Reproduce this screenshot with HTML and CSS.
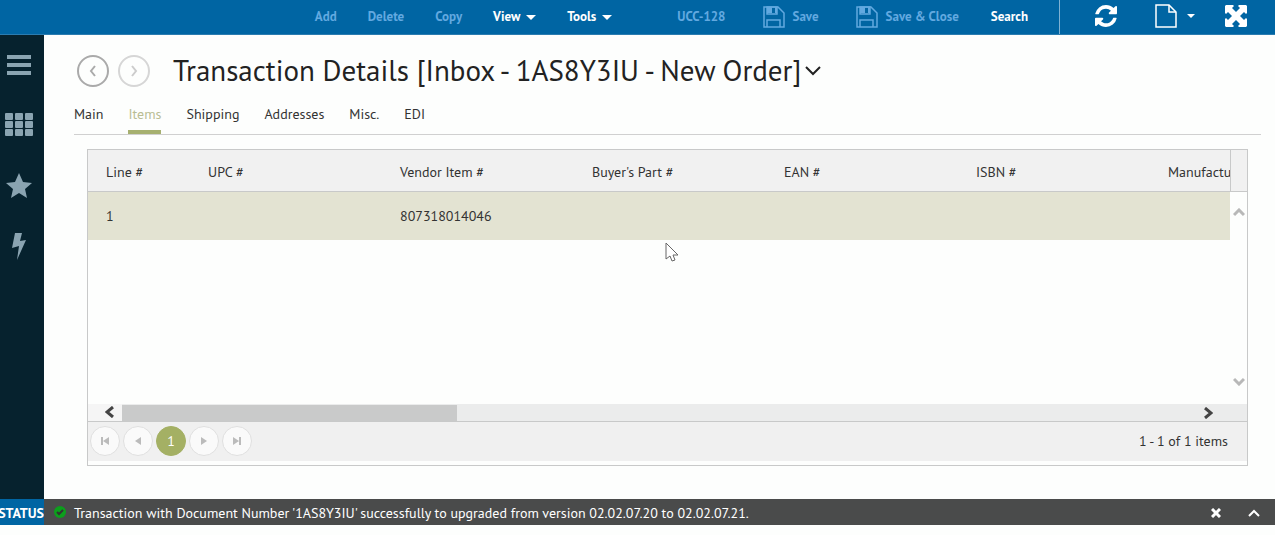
FILE: index.html
```html
<!DOCTYPE html>
<html lang="en">

<head>
    <meta charset="UTF-8">
    <title>Transaction Details</title>
    <link rel="stylesheet" href="styles.css">
</head>

<body>
    <header class="topbar">
        <div class="menu">
            <button type="button" disabled>Add</button>
            <button type="button" disabled>Delete</button>
            <button type="button" disabled>Copy</button>
            <button type="button">View <span class="caret"></span></button>
            <button type="button">Tools <span class="caret"></span></button>
        </div>
        <div class="actions">
            <button type="button" disabled>UCC-128</button>
            <button type="button" class="save" disabled>
                <svg width="22" height="22" viewBox="0 0 22 22" fill="none" stroke="currentColor" stroke-width="1.5"><path d="M1 1h14l6 6v14H1z"/><path d="M4 21v-7h13v7"/><path d="M4 1v7h10V1z"/><path d="M4 1h5v6H4zM12 1h2v6h-2z" fill="currentColor" stroke="none"/></svg>
                Save
            </button>
            <button type="button" class="save-close" disabled>
                <svg width="22" height="22" viewBox="0 0 22 22" fill="none" stroke="currentColor" stroke-width="1.5"><path d="M1 1h14l6 6v14H1z"/><path d="M4 21v-7h13v7"/><path d="M4 1v7h10V1z"/><path d="M4 1h5v6H4zM12 1h2v6h-2z" fill="currentColor" stroke="none"/></svg>
                Save &amp; Close
            </button>
            <button type="button" class="search">Search</button>
        </div>
        <div class="tools">
            <button type="button" aria-label="Refresh">
                <svg width="22" height="22" viewBox="0 0 1536 1536" fill="currentColor"><path d="M1511 928q0 5-1 7-64 268-268 434.500T764 1536q-146 0-282.500-55T238 1324l-129 129q-19 19-45 19t-45-19-19-45V960q0-26 19-45t45-19h448q26 0 45 19t19 45-19 45l-137 137q71 66 161 102t187 36q134 0 250-65t186-179q11-17 53-117 8-23 30-23h192q13 0 22.500 9.500t9.500 22.500zm25-800v448q0 26-19 45t-45 19h-448q-26 0-45-19t-19-45 19-45l138-138Q969 256 768 256q-134 0-250 65T332 500q-11 17-53 117-8 23-30 23H50q-13 0-22.500-9.500T18 608v-7q65-268 270-434.500T768 0q146 0 284 55.500T1297 212l130-129q19-19 45-19t45 19 19 45z"/></svg>
            </button>
            <button type="button" class="document" aria-label="New document">
                <svg width="22" height="24" viewBox="0 0 22 24" fill="none" stroke="currentColor" stroke-width="1.5"><path d="M1 1h13l7 7v15H1z"/><path d="M14 1v7h7"/></svg>
                <span class="caret"></span>
            </button>
            <button type="button" aria-label="Full screen">
                <svg width="22" height="22" viewBox="0 0 22 22" fill="currentColor"><path d="M0 1l1-1h7l1 1-2 2 4 4 4-4-2-2 1-1h7l1 1v7l-1 1-2-2-4 4 4 4 2-2 1 1v7l-1 1h-7l-1-1 2-2-4-4-4 4 2 2-1 1H1l-1-1v-7l1-1 2 2 4-4-4-4-2 2-1-1z"/></svg>
            </button>
        </div>
    </header>

    <div class="page">
        <nav class="sidebar">
            <a href="#" aria-label="Menu"><svg width="24" height="21" viewBox="0 0 24 21"><path d="M0 0h24v4H0zM0 8h24v4H0zM0 16h24v4H0z"/></svg></a>
            <a href="#" aria-label="Apps"><svg width="28" height="24" viewBox="0 0 28 24"><rect width="8" height="7" rx="1"/><rect x="10" width="8" height="7" rx="1"/><rect x="20" width="8" height="7" rx="1"/><rect y="8" width="8" height="7" rx="1"/><rect x="10" y="8" width="8" height="7" rx="1"/><rect x="20" y="8" width="8" height="7" rx="1"/><rect y="16" width="8" height="7" rx="1"/><rect x="10" y="16" width="8" height="7" rx="1"/><rect x="20" y="16" width="8" height="7" rx="1"/></svg></a>
            <a href="#" aria-label="Favorites"><svg width="26" height="26" viewBox="0 0 26 26"><path d="M13 0l4 9 9 1-7 6 2 9-8-5-8 5 2-9-7-6 9-1z"/></svg></a>
            <a href="#" aria-label="Quick actions"><svg width="16" height="27" viewBox="0 0 16 27"><path d="M4 0h7L9 8l6-1L6 27l2-14-7 2z"/></svg></a>
        </nav>

        <main class="content">
            <div class="title">
                <button type="button" class="round" aria-label="Back"><svg width="8" height="12" viewBox="0 0 8 12"><path d="M6 1L2 6l4 5"/></svg></button>
                <button type="button" class="round" aria-label="Forward" disabled><svg width="8" height="12" viewBox="0 0 8 12"><path d="M2 1l4 5-4 5"/></svg></button>
                <h1>Transaction Details [Inbox - 1AS8Y3IU - New Order]</h1>
                <svg class="title-arrow" width="16" height="10" viewBox="0 0 16 10"><path d="M1 1l7 7 7-7"/></svg>
            </div>

            <nav class="tabs">
                <a href="#">Main</a>
                <a href="#" class="active">Items</a>
                <a href="#">Shipping</a>
                <a href="#">Addresses</a>
                <a href="#">Misc.</a>
                <a href="#">EDI</a>
            </nav>

            <section class="grid">
                <div class="grid-body">
                    <div class="grid-table">
                        <table>
                            <thead>
                                <tr>
                                    <th class="line">Line #</th>
                                    <th>UPC #</th>
                                    <th>Vendor Item #</th>
                                    <th>Buyer's Part #</th>
                                    <th>EAN #</th>
                                    <th>ISBN #</th>
                                    <th>Manufacturer #</th>
                                </tr>
                            </thead>
                            <tbody>
                                <tr>
                                    <td>1</td>
                                    <td></td>
                                    <td>807318014046</td>
                                    <td></td>
                                    <td></td>
                                    <td></td>
                                    <td></td>
                                </tr>
                            </tbody>
                        </table>
                    </div>
                    <div class="vscroll">
                        <div class="vscroll-head"></div>
                        <svg width="12" height="9" viewBox="0 0 12 9"><path d="M1 7l5-5 5 5"/></svg>
                        <svg width="12" height="9" viewBox="0 0 12 9"><path d="M1 2l5 5 5-5"/></svg>
                    </div>
                    <svg class="cursor" width="14" height="21" viewBox="0 0 14 21"><path d="M1 1v16l4-3 2 5 3-1-2-5h5z"/></svg>
                </div>
                <div class="hscroll">
                    <span class="hscroll-left"><svg width="10" height="12" viewBox="0 0 10 12"><path d="M8 1L2 6l6 5"/></svg></span>
                    <span class="hscroll-track"><span class="hscroll-thumb"></span></span>
                    <svg width="10" height="12" viewBox="0 0 10 12"><path d="M2 1l6 5-6 5"/></svg>
                </div>
                <div class="pager">
                    <button type="button" aria-label="First page" disabled><svg width="10" height="8" viewBox="0 0 10 8"><path d="M1 0h2v8H1zM9 0v8L3 4z"/></svg></button>
                    <button type="button" aria-label="Previous page" disabled><svg width="10" height="8" viewBox="0 0 10 8"><path d="M8 0v8L2 4z"/></svg></button>
                    <button type="button" class="current">1</button>
                    <button type="button" aria-label="Next page" disabled><svg width="10" height="8" viewBox="0 0 10 8"><path d="M2 0v8l6-4z"/></svg></button>
                    <button type="button" aria-label="Last page" disabled><svg width="10" height="8" viewBox="0 0 10 8"><path d="M7 0h2v8H7zM1 0v8l6-4z"/></svg></button>
                    <span class="pager-info">1 - 1 of 1 items</span>
                </div>
            </section>
        </main>
    </div>

    <footer class="status">
        <strong>STATUS</strong>
        <svg width="12" height="12" viewBox="0 0 12 12"><circle cx="6" cy="6" r="6" fill="#0c9f1c"/><path d="M3 6l2 2 4-4" fill="none" stroke="#333" stroke-width="2"/></svg>
        <p>Transaction with Document Number '1AS8Y3IU' successfully to upgraded from version 02.02.07.20 to 02.02.07.21.</p>
        <button type="button" aria-label="Close"><svg width="10" height="10" viewBox="0 0 10 10"><path d="M1 1l8 8M9 1L1 9" stroke-width="3"/></svg></button>
        <button type="button" aria-label="Expand"><svg width="12" height="10" viewBox="0 0 12 10"><path d="M1 8l5-5 5 5" stroke-width="2"/></svg></button>
    </footer>
</body>

</html>
```
FILE: styles.css
```css
* {
  box-sizing: border-box;
}

body {
  margin: 0;
  min-height: 100vh;
  padding-bottom: 10px;
  display: flex;
  flex-direction: column;
  background: #fdfefd;
  color: #333;
  font: 14px/20px "PT Sans", "Noto Sans", sans-serif;
}

button {
  padding: 0;
  border: 0;
  background: none;
  color: inherit;
  font: inherit;
}

a {
  color: inherit;
  text-decoration: none;
}

svg {
  display: block;
  flex: none;
}

/* top bar */
.topbar {
  height: 35px;
  display: flex;
  justify-content: flex-end;
  background: #0065a3;
  border-bottom: 1px solid #2b7cb0;
  color: #fff;
  font-size: 13px;
  font-weight: 600;
}
.menu, .actions, .tools {
  display: flex;
}
.topbar button {
  display: flex;
  align-items: center;
  white-space: nowrap;
}
.menu button {
  margin-right: 31px;
}
.menu {
  margin-right: 34px;
}
.topbar button:disabled {
  color: #62a9e0;
}
.actions button {
  gap: 8px;
  margin-right: 37px;
}
.actions .save-close {
  margin-right: 32px;
}
.actions .search {
  margin-right: 31px;
}
.caret {
  margin-left: 6px;
  border: 5px solid transparent;
  border-top-color: currentColor;
  border-bottom: 0;
}
.tools {
  border-left: 1px solid #7fb2d3;
  padding: 0 28px 2px 35px;
  gap: 30px;
}
.tools .document {
  margin-left: 8px;
}
.tools .caret {
  margin-left: 10px;
  border-width: 4px 4px 0;
}

/* page */
.page {
  flex: 1;
  display: flex;
}
.sidebar {
  width: 44px;
  padding: 20px 6px 0 0;
  display: flex;
  flex-direction: column;
  align-items: center;
  background: #06222e;
}
.sidebar a {
  height: 60px;
}
.sidebar a:first-child {
  height: 58px;
}
.sidebar svg {
  fill: #8aa4b1;
}
.content {
  flex: 1;
  min-width: 0;
  padding: 19px 14px 33px 30px;
  display: flex;
  flex-direction: column;
}
.title {
  height: 34px;
  padding-left: 3px;
  display: flex;
  align-items: center;
}
.title path {
  fill: none;
  stroke: currentColor;
  stroke-width: 2;
}
.round {
  width: 32px;
  height: 32px;
  margin-right: 9px;
  display: flex;
  align-items: center;
  justify-content: center;
  border: 2px solid #aaa;
  border-radius: 50%;
  color: #aaa;
}
.round:disabled {
  border-color: #d6d6d6;
  color: #ccc;
}
h1 {
  margin: 0 4px 0 14px;
  color: #222;
  font-size: 29px;
  font-weight: 400;
  line-height: 32px;
  padding-bottom: 2px;
  white-space: nowrap;
}
.title-arrow {
  color: #222;
}
.tabs {
  height: 47px;
  display: flex;
  gap: 25px;
  border-bottom: 1px solid #d0d0d0;
}
.tabs a {
  height: 46px;
  padding-top: 16px;
}
.tabs .active {
  border-bottom: 4px solid #a6b070;
  color: #b9bd94;
}

/* items grid */
.grid {
  flex: 1;
  margin: 14px 13px 0;
  padding-bottom: 4px;
  display: flex;
  flex-direction: column;
  border: 1px solid #c8c9c9;
}
.grid-body {
  position: relative;
  flex: 1;
  display: flex;
}
.grid-table {
  flex: 1;
  min-width: 0;
  overflow: hidden;
}
table {
  width: 1254px;
  table-layout: fixed;
  border-collapse: separate;
  border-spacing: 0;
}
th, td {
  padding: 0 18px;
  text-align: left;
  font-weight: 400;
  white-space: nowrap;
}
th {
  width: 192px;
  height: 42px;
  padding-top: 2px;
  background: #f1f1f1;
  border-bottom: 1px solid #c8c9c9;
}
th.line {
  width: 102px;
}
td {
  height: 48px;
  background: #e3e3d2;
}
.vscroll {
  width: 17px;
  padding-bottom: 18px;
  display: flex;
  flex-direction: column;
  align-items: center;
  justify-content: space-between;
}
.vscroll-head {
  width: 100%;
  height: 42px;
  margin-bottom: 16px;
  background: #f1f1f1;
  border-bottom: 1px solid #c8c9c9;
  border-left: 1px solid #c8c9c9;
}
.vscroll svg:last-child {
  margin-top: auto;
}
.vscroll path, .hscroll path {
  fill: none;
  stroke: #b8b8b8;
  stroke-width: 3;
}
.cursor {
  position: absolute;
  left: 577px;
  top: 92px;
  fill: #fff;
  stroke: #666;
}
.hscroll {
  height: 17px;
  padding-right: 34px;
  display: flex;
  align-items: center;
  background: #ebecec;
}
.hscroll path {
  stroke: #444;
}
.hscroll-left {
  width: 34px;
  height: 17px;
  padding: 2px 0 0 17px;
  background: #f5f5f5;
}
.hscroll-track {
  flex: 1;
}
.hscroll-thumb {
  display: block;
  width: 31%;
  height: 16px;
  background: #c9caca;
}
.pager {
  height: 40px;
  padding: 0 19px 2px 2px;
  display: flex;
  align-items: center;
  gap: 3px;
  background: #f0f0f0;
  border-top: 1px solid #c8c9c9;
}
.pager button {
  width: 30px;
  height: 30px;
  display: flex;
  align-items: center;
  justify-content: center;
  background: #fafafa;
  border: 1px solid #e0e0e0;
  border-radius: 50%;
}
.pager path {
  fill: #bbb;
}
.pager .current {
  background: #a4b064;
  border-color: #a4b064;
  color: #fff;
}
.pager-info {
  margin-left: auto;
}

/* status bar */
.status {
  height: 26px;
  padding-right: 15px;
  display: flex;
  align-items: center;
  background: #4a4b4b;
  color: #fff;
}
.status strong {
  width: 44px;
  height: 26px;
  margin-right: 10px;
  display: flex;
  justify-content: flex-end;
  overflow: hidden;
  background: #0065a3;
  font-weight: 600;
  line-height: 28px;
}
.status p {
  flex: 1;
  margin: 0 0 0 8px;
  padding-top: 2px;
}
.status button {
  padding-top: 2px;
  margin-left: 27px;
}
.status button path {
  fill: none;
  stroke: #fff;
}
```
